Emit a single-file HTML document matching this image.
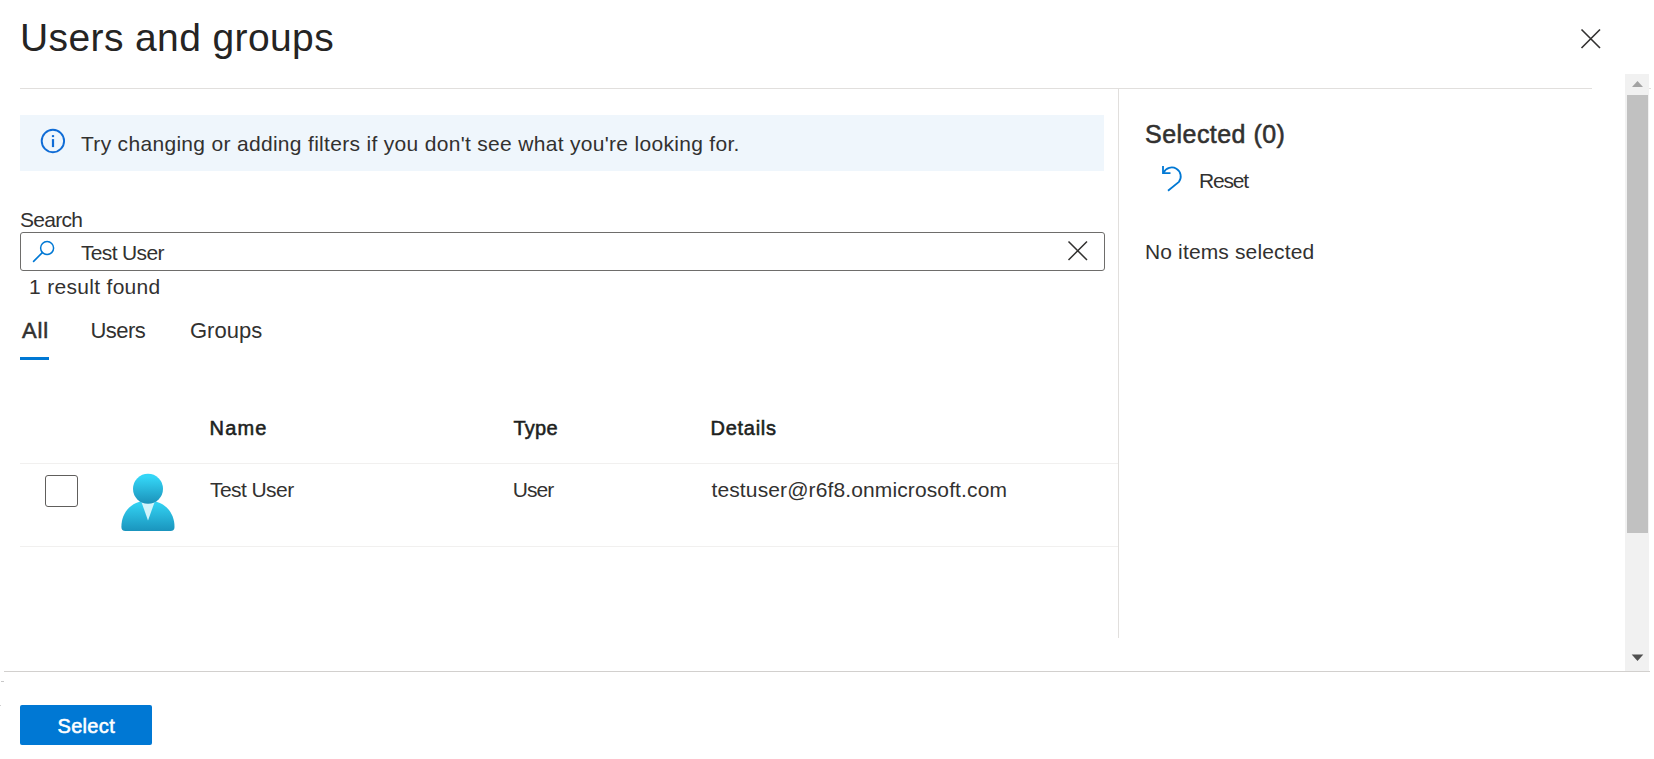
<!DOCTYPE html>
<html><head><meta charset="utf-8"><title>Users and groups</title>
<style>
html,body{margin:0;padding:0;background:#fff;}
body{width:1654px;height:759px;position:relative;overflow:hidden;font-family:"Liberation Sans",sans-serif;}
.t{position:absolute;white-space:nowrap;}
.a{position:absolute;}
svg.a{z-index:5;}
</style></head><body>
<div class="t" style="left:20.00px;top:17.69px;font-size:39px;line-height:39px;font-weight:400;color:#252423;letter-spacing:0.39px">Users and groups</div>
<svg class="a" style="left:0;top:0" width="1654" height="759" viewBox="0 0 1654 759"><path d="M1581.5,29.5 L1600,48 M1600,29.5 L1581.5,48" stroke="#323130" stroke-width="1.65" fill="none"/><circle cx="52.9" cy="141" r="11.2" stroke="#0f6cd6" stroke-width="1.9" fill="none"/><rect x="51.9" y="135.1" width="2.2" height="2" fill="#0f6cd6"/><rect x="51.9" y="139.1" width="2.2" height="8" fill="#0f6cd6"/><circle cx="47.1" cy="248.05" r="6.5" stroke="#0078d4" stroke-width="1.5" fill="none"/><path d="M42.3,252.6 L33.6,261.4" stroke="#0078d4" stroke-width="1.6" fill="none" stroke-linecap="round"/><path d="M1068.5,241.5 L1087,260 M1087,241.5 L1068.5,260" stroke="#323130" stroke-width="1.5" fill="none"/><path d="M1163,166 V173.2 H1170.5" stroke="#0078d4" stroke-width="1.8" fill="none"/><path d="M1163.6,172.6 A9,9 0 1 1 1178.9,181.9 L1168,190.8" stroke="#0078d4" stroke-width="1.8" fill="none"/><path d="M1632,87 L1643,87 L1637.5,81 Z" fill="#a3a3a3"/><path d="M1631.7,654.6 L1643.3,654.6 L1637.5,661 Z" fill="#505050"/><defs><linearGradient id="gh" x1="0" y1="0" x2="0" y2="1"><stop offset="0.1" stop-color="#34d6f7"/><stop offset="1" stop-color="#1b91b9"/></linearGradient><linearGradient id="gb" x1="0" y1="0" x2="0" y2="1"><stop offset="0" stop-color="#35d7f7"/><stop offset="1" stop-color="#1a94bd"/></linearGradient></defs><path d="M121.4,527 C121.4,511 133,500.5 148,500.5 C163,500.5 174.5,511 174.5,527 Q174.5,531 170.5,531 L125.4,531 Q121.4,531 121.4,527 Z" fill="url(#gb)"/><path d="M140.8,500.2 L155.3,500.2 L148,520.4 Z" fill="#d2f4fb"/><circle cx="148" cy="488.8" r="15" fill="url(#gh)"/></svg>
<div class="a" style="left:20px;top:88px;width:1572px;height:1px;background:#e1dfdd"></div>
<div class="a" style="left:1118px;top:88px;width:1px;height:550px;background:#e1dfdd"></div>
<div class="a" style="left:20px;top:115px;width:1084px;height:56px;background:#eff6fc"></div>
<div class="t" style="left:81.00px;top:133.22px;font-size:21px;line-height:21px;font-weight:400;color:#323130;letter-spacing:0.31px">Try changing or adding filters if you don't see what you're looking for.</div>
<div class="t" style="left:20.00px;top:209.22px;font-size:21px;line-height:21px;font-weight:400;color:#323130;letter-spacing:-0.72px">Search</div>
<div class="a" style="left:20px;top:232px;width:1085px;height:39px;border:1.3px solid #6e6d6b;border-radius:3px;box-sizing:border-box"></div>
<div class="t" style="left:81.00px;top:242.22px;font-size:21px;line-height:21px;font-weight:400;color:#323130;letter-spacing:-0.66px">Test User</div>
<div class="t" style="left:29.00px;top:276.02px;font-size:21px;line-height:21px;font-weight:400;color:#323130;letter-spacing:0.31px">1 result found</div>
<div class="t" style="left:22.00px;top:319.88px;font-size:22px;line-height:22px;font-weight:400;color:#323130;letter-spacing:0.9px;-webkit-text-stroke:0.55px #323130">All</div>
<div class="t" style="left:90.50px;top:319.88px;font-size:22px;line-height:22px;font-weight:400;color:#323130;letter-spacing:-0.52px">Users</div>
<div class="t" style="left:190.00px;top:319.88px;font-size:22px;line-height:22px;font-weight:400;color:#323130;">Groups</div>
<div class="a" style="left:20px;top:357px;width:29px;height:3px;background:#0078d4"></div>
<div class="t" style="left:209.50px;top:418.07px;font-size:20px;line-height:20px;font-weight:400;color:#201f1e;letter-spacing:1.2px;-webkit-text-stroke:0.55px #201f1e">Name</div>
<div class="t" style="left:513.50px;top:418.07px;font-size:20px;line-height:20px;font-weight:400;color:#201f1e;letter-spacing:0.23px;-webkit-text-stroke:0.55px #201f1e">Type</div>
<div class="t" style="left:710.50px;top:418.07px;font-size:20px;line-height:20px;font-weight:400;color:#201f1e;letter-spacing:0.72px;-webkit-text-stroke:0.55px #201f1e">Details</div>
<div class="a" style="left:20px;top:463px;width:1098px;height:1px;background:#f1f0ef"></div>
<div class="a" style="left:45px;top:475px;width:33px;height:32px;border:1.3px solid #605e5c;border-radius:3px;box-sizing:border-box"></div>
<div class="t" style="left:210.00px;top:479.22px;font-size:21px;line-height:21px;font-weight:400;color:#323130;letter-spacing:-0.57px">Test User</div>
<div class="t" style="left:512.80px;top:479.22px;font-size:21px;line-height:21px;font-weight:400;color:#323130;letter-spacing:-0.93px">User</div>
<div class="t" style="left:711.50px;top:479.22px;font-size:21px;line-height:21px;font-weight:400;color:#323130;letter-spacing:0.12px">testuser@r6f8.onmicrosoft.com</div>
<div class="a" style="left:20px;top:546px;width:1098px;height:1px;background:#f1f0ef"></div>
<div class="t" style="left:1145.00px;top:122.14px;font-size:25px;line-height:25px;font-weight:400;color:#323130;letter-spacing:0.46px;-webkit-text-stroke:0.55px #323130">Selected (0)</div>
<div class="t" style="left:1199.00px;top:170.02px;font-size:21px;line-height:21px;font-weight:400;color:#323130;letter-spacing:-1.17px">Reset</div>
<div class="t" style="left:1145.00px;top:241.12px;font-size:21px;line-height:21px;font-weight:400;color:#323130;letter-spacing:0.14px">No items selected</div>
<div class="a" style="left:1625px;top:74px;width:24px;height:597px;background:#f1f1f1"></div>
<div class="a" style="left:1627px;top:95px;width:21px;height:438px;background:#c1c1c1"></div>
<div class="a" style="left:1649px;top:88px;width:2px;height:1px;background:#e1dfdd"></div>
<div class="a" style="left:1px;top:681px;width:3px;height:1px;background:#c8c8c8"></div>
<div class="a" style="left:0px;top:705px;width:1px;height:1px;background:#d0d0d0"></div>
<div class="a" style="left:4px;top:671px;width:1646px;height:1px;background:#d2d0ce"></div>
<div class="a" style="left:20px;top:705px;width:132px;height:40px;background:#0078d4;border-radius:2px"></div>
<div class="t" style="left:57.50px;top:716.07px;font-size:20px;line-height:20px;font-weight:400;color:#ffffff;letter-spacing:0.32px;-webkit-text-stroke:0.55px #ffffff">Select</div>

</body></html>
